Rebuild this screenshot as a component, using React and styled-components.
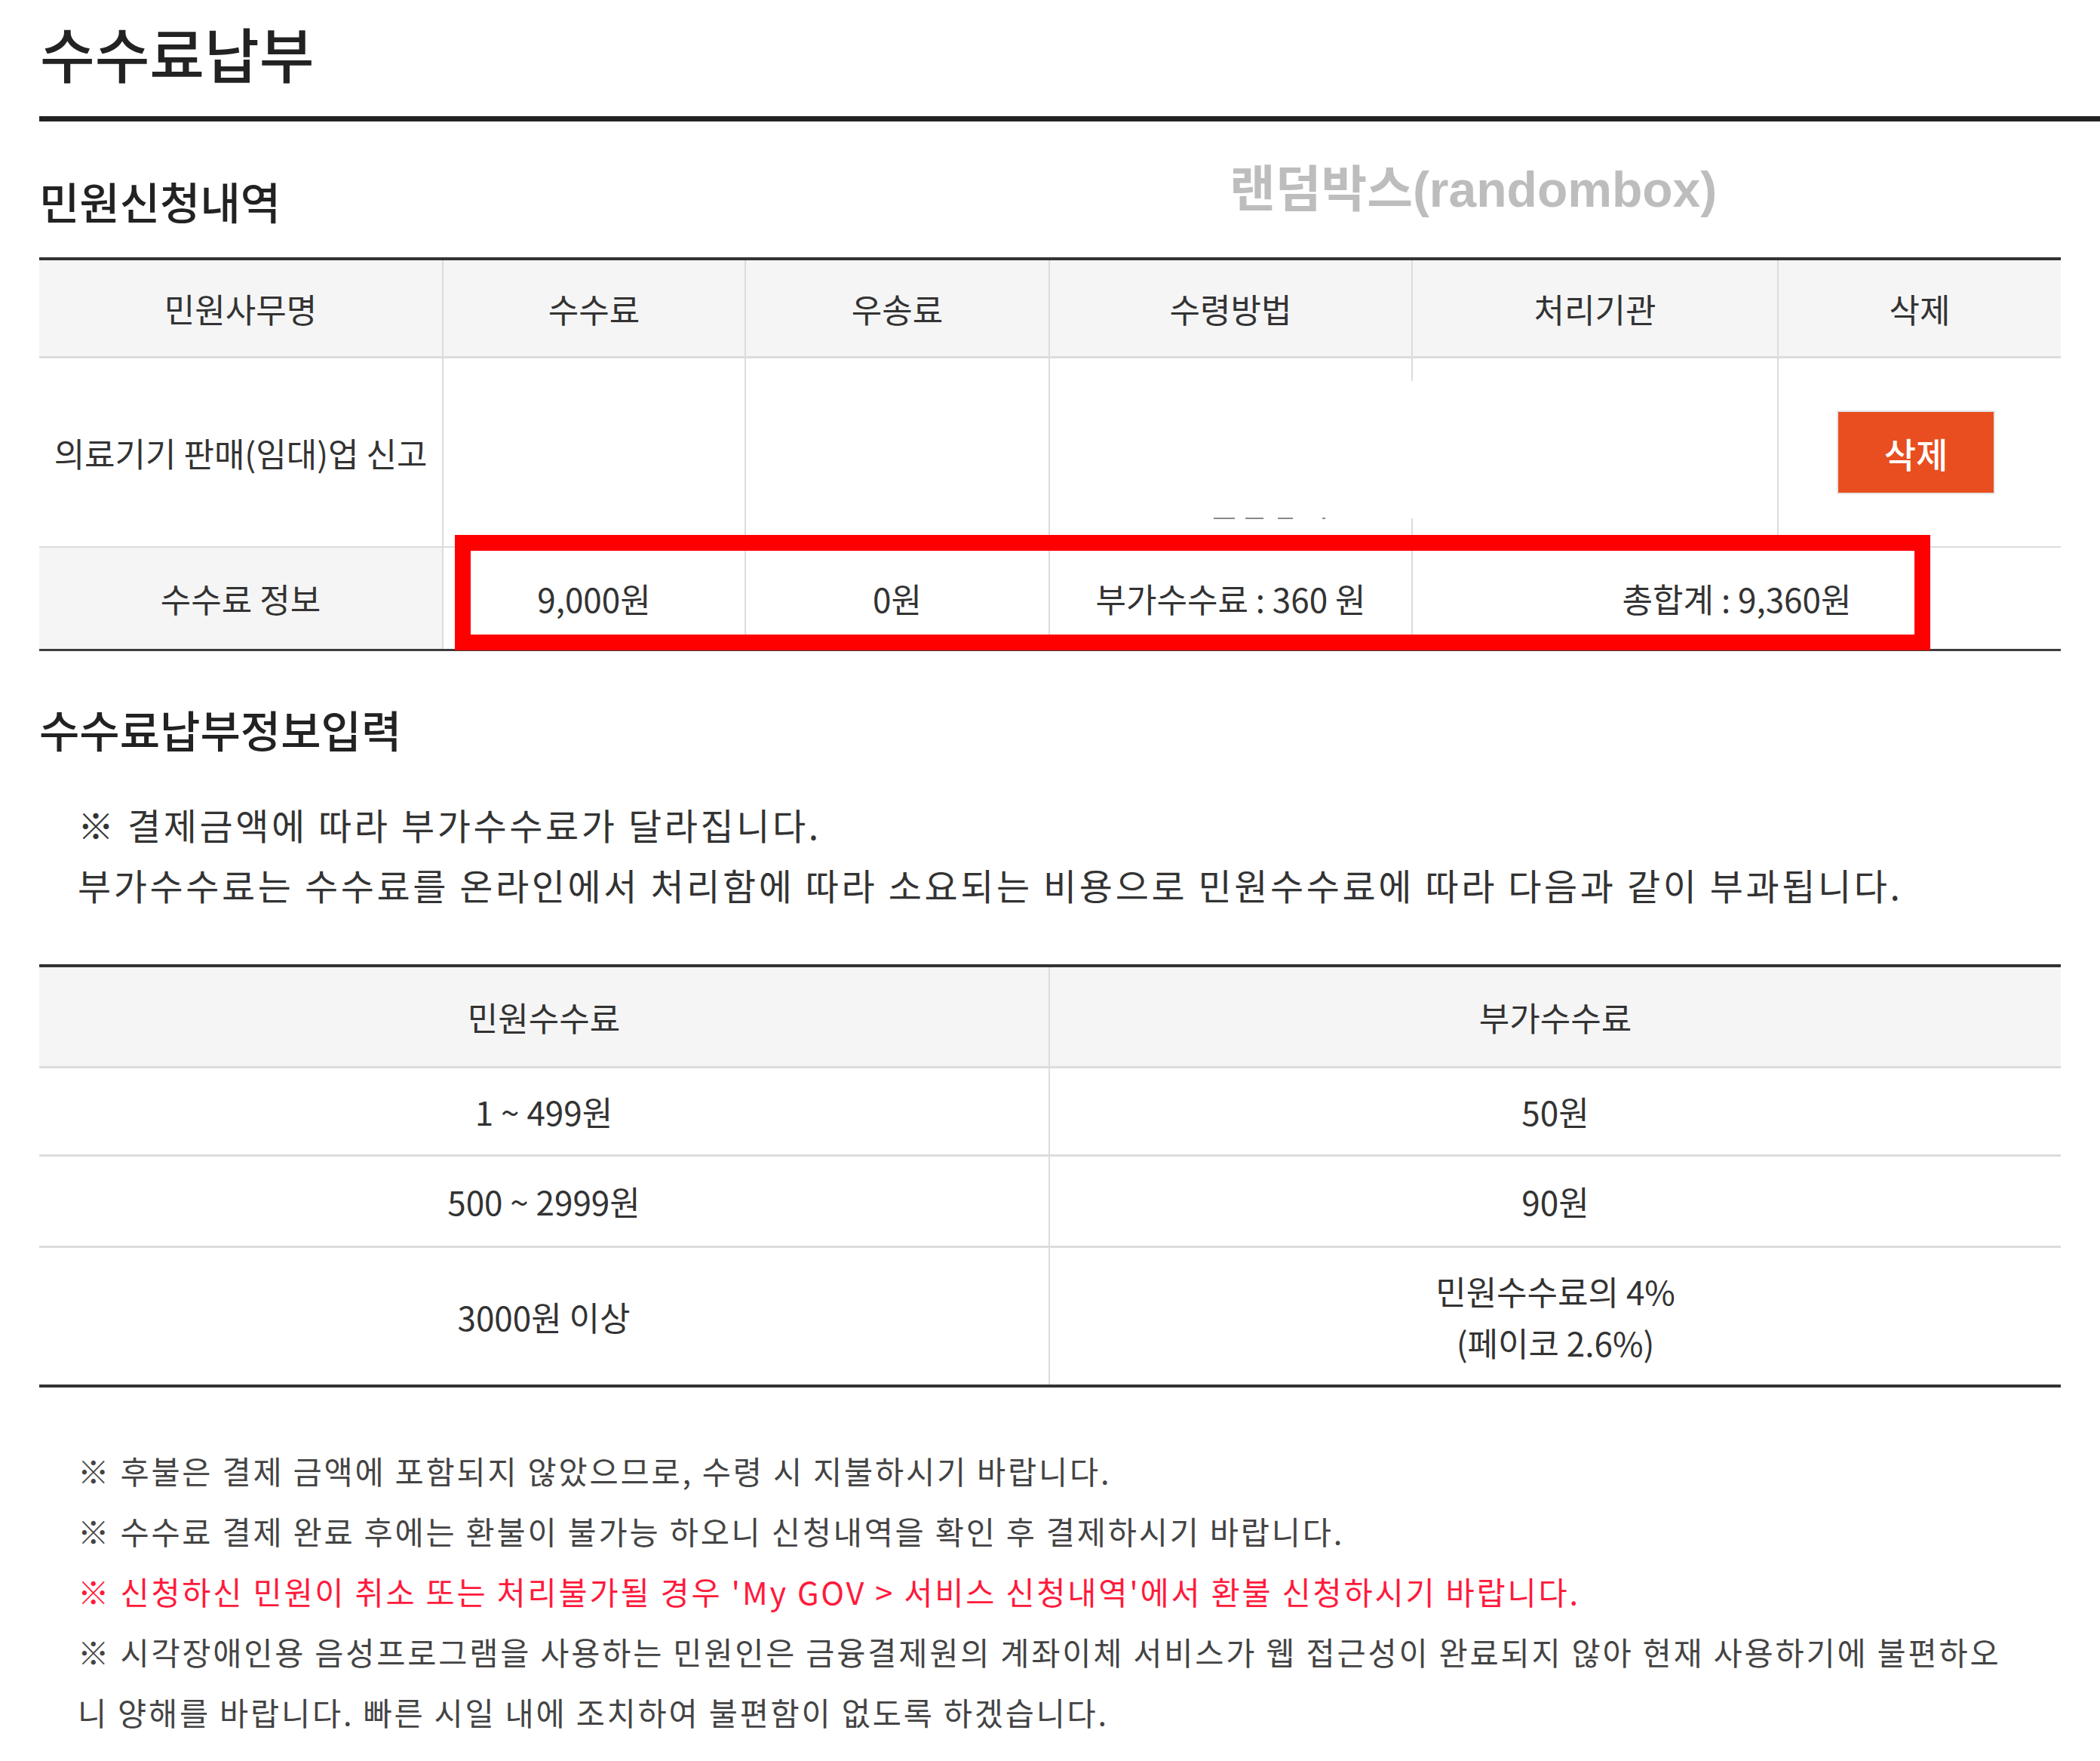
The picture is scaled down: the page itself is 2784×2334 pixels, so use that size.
import React from "react";
import styled, { createGlobalStyle } from "styled-components";

const GlobalStyle = createGlobalStyle`
  html, body {
    margin: 0;
    padding: 0;
    background: #fff;
  }
  body {
    font-family: "Noto Sans CJK KR", "Noto Sans", sans-serif;
    color: #333;
  }
`;

const Page = styled.main`
  width: 2784px;
  padding-left: 52px;
  box-sizing: border-box;
`;

const TitleBar = styled.header`
  padding: 32px 0 47px;
  border-bottom: 7px solid #222;
`;

const Title = styled.h1`
  margin: 0 0 0 1px;
  font-size: 79px;
  line-height: 75px;
  font-weight: 500;
  color: #222;
`;

const SectionHead = styled.div`
  position: relative;
  height: 180px;
  padding-top: 75px;
  box-sizing: border-box;
`;

const SectionTitle = styled.h2`
  margin: ${(p) => (p.$top ? `${p.$top}px` : 0)} 0 0;
  font-size: 58px;
  line-height: 60px;
  font-weight: 500;
  color: #222;
`;

const Watermark = styled.span`
  position: absolute;
  top: 57px;
  left: 1578px;
  font-family: "Liberation Sans", "Noto Sans CJK KR", sans-serif;
  font-size: 66px;
  line-height: 66px;
  font-weight: 700;
  color: #bdbdbd;
  white-space: nowrap;
`;

const TableWrap = styled.div`
  position: relative;
  width: 2680px;
`;

const Grid = styled.div`
  display: grid;
  grid-template-columns: ${(p) => p.$cols};
  border-top: 4px solid #333;
  border-bottom: ${(p) => p.$bottom || "4px solid #333"};
`;

const Cell = styled.div`
  display: flex;
  align-items: center;
  justify-content: center;
  text-align: center;
  box-sizing: border-box;
  height: ${(p) => p.$h}px;
  font-size: 44px;
  line-height: 68px;
  color: #333;
  background: ${(p) => (p.$shade ? "#f5f5f5" : "#fff")};
  border-left: ${(p) => (p.$first ? "none" : "2px solid #dcdcdc")};
  border-bottom: ${(p) => (p.$line ? `${p.$line}px solid #dcdcdc` : "none")};
  grid-column: ${(p) => (p.$span ? `span ${p.$span}` : "auto")};
  white-space: nowrap;
`;

const DeleteButton = styled.button`
  width: 206px;
  height: 107px;
  margin-right: 10px;
  border: none;
  background: #e84e1f;
  box-shadow: 0 0 0 2px #e6e6e6;
  color: #fff;
  font-family: inherit;
  font-size: 46px;
  font-weight: 500;
  cursor: pointer;
`;

/* red annotation frame drawn over the fee row */
const Highlight = styled.div`
  position: absolute;
  left: 551px;
  top: 368px;
  width: 1956px;
  height: 153px;
  box-sizing: border-box;
  border: 21px solid #ff0000;
  pointer-events: none;
`;

/* blanked-out area over the receipt / agency cells */
const Redaction = styled.div`
  position: absolute;
  left: 1340px;
  top: 164px;
  width: 484px;
  height: 182px;
  background: #fff;
`;

const Remnant = styled.span`
  position: absolute;
  top: 345px;
  height: 2px;
  background: #8a8a8a;
`;

const Notice = styled.p`
  margin: ${(p) => p.$top}px 0 0 51px;
  font-size: 48px;
  line-height: 80px;
  letter-spacing: 3.6px;
  color: #333;
  white-space: nowrap;
`;

const NoteList = styled.div`
  margin: 70px 0 0 51px;
`;

const Note = styled.div`
  font-size: 41.5px;
  line-height: 80px;
  letter-spacing: 2.8px;
  color: ${(p) => (p.$alert ? "#ff1a3c" : "#444")};
  white-space: nowrap;
`;

const remnants = [
  { left: 1557, width: 28 },
  { left: 1599, width: 24 },
  { left: 1642, width: 20 },
  { left: 1701, width: 4 },
];

const feeRules = [
  { range: "1 ~ 499원", fee: "50원", h: 117 },
  { range: "500 ~ 2999원", fee: "90원", h: 121 },
];

const App = () => (
  <>
    <GlobalStyle />
    <Page>
      <TitleBar>
        <Title>수수료납부</Title>
      </TitleBar>

      <SectionHead>
        <SectionTitle>민원신청내역</SectionTitle>
        <Watermark>랜덤박스(randombox)</Watermark>
      </SectionHead>

      <TableWrap>
        <Grid $cols="534px 401px 403px 481px 485px 1fr" $bottom="3px solid #3d3d3d">
          <Cell $h={130} $line={3} $shade $first>민원사무명</Cell>
          <Cell $h={130} $line={3} $shade>수수료</Cell>
          <Cell $h={130} $line={3} $shade>우송료</Cell>
          <Cell $h={130} $line={3} $shade>수령방법</Cell>
          <Cell $h={130} $line={3} $shade>처리기관</Cell>
          <Cell $h={130} $line={3} $shade>삭제</Cell>

          <Cell $h={251} $line={2} $first>의료기기 판매(임대)업 신고</Cell>
          <Cell $h={251} $line={2} />
          <Cell $h={251} $line={2} />
          <Cell $h={251} $line={2} />
          <Cell $h={251} $line={2} />
          <Cell $h={251} $line={2}>
            <DeleteButton type="button">삭제</DeleteButton>
          </Cell>

          <Cell $h={134} $shade $first>수수료 정보</Cell>
          <Cell $h={134}>9,000원</Cell>
          <Cell $h={134}>0원</Cell>
          <Cell $h={134}>부가수수료 : 360 원</Cell>
          <Cell $h={134} $span={2}>총합계 : 9,360원</Cell>
        </Grid>
        <Redaction />
        {remnants.map((r) => (
          <Remnant key={r.left} style={{ left: r.left, width: r.width }} />
        ))}
        <Highlight />
      </TableWrap>

      <SectionTitle $top={73}>수수료납부정보입력</SectionTitle>
      <Notice $top={56}>
        ※ 결제금액에 따라 부가수수료가 달라집니다.
        <br />
        부가수수료는 수수료를 온라인에서 처리함에 따라 소요되는 비용으로 민원수수료에 따라 다음과 같이 부과됩니다.
      </Notice>

      <TableWrap style={{ marginTop: 66 }}>
        <Grid $cols="1338px 1fr">
          <Cell $h={134} $line={3} $shade $first>민원수수료</Cell>
          <Cell $h={134} $line={3} $shade>부가수수료</Cell>
          {feeRules.map((r) => (
            <React.Fragment key={r.range}>
              <Cell $h={r.h} $line={3} $first>{r.range}</Cell>
              <Cell $h={r.h} $line={3}>{r.fee}</Cell>
            </React.Fragment>
          ))}
          <Cell $h={181} $first>3000원 이상</Cell>
          <Cell $h={181}>
            민원수수료의 4%
            <br />
            (페이코 2.6%)
          </Cell>
        </Grid>
      </TableWrap>

      <NoteList>
        <Note>※ 후불은 결제 금액에 포함되지 않았으므로, 수령 시 지불하시기 바랍니다.</Note>
        <Note>※ 수수료 결제 완료 후에는 환불이 불가능 하오니 신청내역을 확인 후 결제하시기 바랍니다.</Note>
        <Note $alert>※ 신청하신 민원이 취소 또는 처리불가될 경우 'My GOV &gt; 서비스 신청내역'에서 환불 신청하시기 바랍니다.</Note>
        <Note>※ 시각장애인용 음성프로그램을 사용하는 민원인은 금융결제원의 계좌이체 서비스가 웹 접근성이 완료되지 않아 현재 사용하기에 불편하오</Note>
        <Note>니 양해를 바랍니다. 빠른 시일 내에 조치하여 불편함이 없도록 하겠습니다.</Note>
      </NoteList>
    </Page>
  </>
);

export default App;
